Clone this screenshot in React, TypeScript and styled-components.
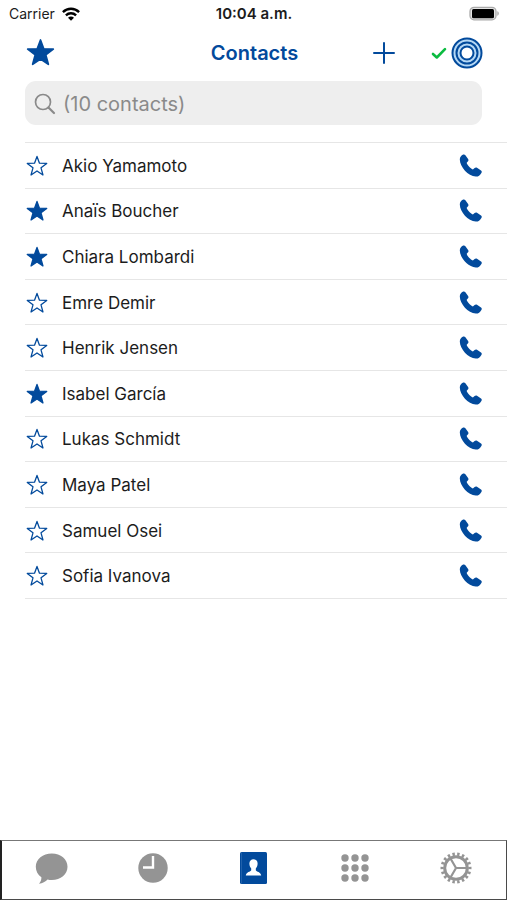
import React, { useState } from "react";
import styled, { createGlobalStyle } from "styled-components";

const navy = "#024a9c";
const grey = "#949494";

const GlobalStyle = createGlobalStyle`
  *, *::before, *::after { box-sizing: border-box; }
  body {
    margin: 0;
    background: #fff;
    color: #1c1c1c;
    font-family: Inter, "Liberation Sans", sans-serif;
  }
`;

const Page = styled.div`
  display: flex;
  flex-direction: column;
  min-height: 100vh;
`;

const StatusBar = styled.div`
  display: grid;
  grid-template-columns: 1fr auto 1fr;
  align-items: center;
  height: 28px;
  padding: 0 8px 0 9px;
  font-size: 14px;
  line-height: 20px;
`;

const Carrier = styled.span`
  display: flex;
  align-items: center;
  gap: 7px;
`;

const Time = styled.time`
  font-weight: 600;
  font-size: 15px;
`;

const BatteryIcon = styled.svg`
  justify-self: end;
`;

const Header = styled.header`
  display: grid;
  grid-template-columns: 1fr auto 1fr;
  align-items: center;
  height: 49px;
  padding: 0 24px 0 26px;
`;

const Title = styled.h1`
  margin: 0;
  color: ${navy};
  font-size: 20px;
  line-height: 24px;
  font-weight: 600;
`;

const Actions = styled.div`
  display: flex;
  align-items: center;
  justify-content: flex-end;
`;

const IconButton = styled.button`
  display: flex;
  align-items: center;
  justify-content: center;
  justify-self: start;
  padding: 0;
  border: 0;
  background: none;
  color: ${navy};
  cursor: pointer;
`;

const AccountButton = styled(IconButton)`
  gap: 4px;
  margin-left: 36px;
`;

const SearchField = styled.label`
  display: flex;
  align-items: center;
  gap: 7px;
  height: 44px;
  margin: 4px 25px 17px;
  padding: 1px 9px 0;
  border-radius: 11px;
  background: #eee;
  color: #8a8a8a;
`;

const SearchInput = styled.input`
  flex: 1;
  min-width: 0;
  padding: 0;
  border: 0;
  outline: 0;
  background: none;
  color: #1c1c1c;
  font: inherit;
  font-size: 20px;
  line-height: 24px;
  &::placeholder { color: #8a8a8a; opacity: 1; }
`;

const ContactList = styled.ul`
  display: grid;
  grid-auto-rows: 1fr;
  min-height: 457px;
  margin: 0 0 0 25px;
  padding: 0;
  border-top: 1px solid #e6e6e6;
  list-style: none;
`;

const ContactRow = styled.li`
  display: flex;
  align-items: center;
  gap: 14px;
  padding: 1px 24px 0 1px;
  border-bottom: 1px solid #e6e6e6;
`;

const ContactName = styled.span`
  flex: 1;
  font-size: 17px;
  line-height: 24px;
`;

const TabBar = styled.nav`
  display: flex;
  height: 60px;
  margin-top: auto;
  border: 1px solid #4a4a4a;
  border-top-color: #777;
  border-left: 2px solid #222;
`;

const Tab = styled.button<{ $active?: boolean }>`
  display: flex;
  flex: 1;
  align-items: center;
  justify-content: center;
  padding: 0 0 4px;
  border: 0;
  background: none;
  color: ${(p) => (p.$active ? navy : grey)};
  cursor: pointer;
`;

const Star = ({ size, filled }: { size: number; filled: boolean }) => (
  <svg width={size} height={size} viewBox="0 0 24 24" aria-hidden="true">
    <path
      d="M12 1.6 14.7 8.9 22.6 9.2 16.4 14 18.5 21.8 12 17.400 5.500 21.800 7.600 14 1.400 9.200 9.300 8.900Z"
      fill={filled ? "currentColor" : "#fff"}
      stroke="currentColor"
      strokeWidth="1.4"
      strokeLinejoin="round"
    />
  </svg>
);

const Phone = () => (
  <svg width="24" height="24" viewBox="0 0 24 24" aria-hidden="true">
    <path
      fill="currentColor"
      d="M4.200.6C5 .2 5.800.5 6.400 1.200L9.100 5C9.700 5.900 9.600 6.900 8.800 7.600L7.700 8.800C8 11 11.500 14.600 13.900 15.400L15.600 14C16.400 13.300 17.200 13.200 18 13.800L22 16.600C22.900 17.200 23 18.200 22.400 19C21 21.500 19 22.800 16.800 22.600C9 21.800 1 13 .8 5.400C.8 3.300 2.300 1.500 4.200.6Z"
    />
  </svg>
);

const initialContacts = [
  { name: "Akio Yamamoto", starred: false },
  { name: "Anaïs Boucher", starred: true },
  { name: "Chiara Lombardi", starred: true },
  { name: "Emre Demir", starred: false },
  { name: "Henrik Jensen", starred: false },
  { name: "Isabel García", starred: true },
  { name: "Lukas Schmidt", starred: false },
  { name: "Maya Patel", starred: false },
  { name: "Samuel Osei", starred: false },
  { name: "Sofia Ivanova", starred: false },
];

const tabs = [
  {
    label: "Messages",
    icon: (
      <svg width="34" height="34" viewBox="0 0 34 34" fill="currentColor" aria-hidden="true">
        <path d="M16.800 2.500C25.800 2.500 32.500 8.300 32.500 15.800S25.800 29 16.800 29C15.300 29 13.900 28.900 12.600 28.500C10.500 30.600 7.500 32.300 4 32.700C5.700 31 6.500 28.900 6.400 26.300C2.800 23.900 .8 20 .8 15.800C.8 8.300 7.800 2.500 16.800 2.500Z" />
      </svg>
    ),
  },
  {
    label: "Recents",
    icon: (
      <svg width="32" height="32" viewBox="0 0 32 32" aria-hidden="true">
        <circle cx="16" cy="16" r="14.7" fill="currentColor" />
        <path d="M16 4V15.500H6" fill="none" stroke="#fff" strokeWidth="2.400" />
      </svg>
    ),
  },
  {
    label: "Contacts",
    icon: (
      <svg width="28" height="32" viewBox="0 0 28 32" aria-hidden="true">
        <rect width="27" height="32" rx="1.500" fill="currentColor" />
        <path d="M1.500 0.500V31.500" stroke="#2867ae" strokeWidth="0.800" />
        <path
          fill="#fff"
          d="M13.500 7.300C16 7.300 17.800 9.200 17.600 11.800C17.500 13.800 16.800 15.500 15.800 16.500V18.200C16.300 19.800 21 19.800 21.200 23.600H5.800C6 19.800 10.700 19.800 11.200 18.200V16.500C10.200 15.500 9.500 13.800 9.400 11.800C9.200 9.200 11 7.300 13.500 7.300Z"
        />
      </svg>
    ),
  },
  {
    label: "Keypad",
    icon: (
      <svg width="28" height="28" viewBox="0 0 28 28" fill="currentColor" aria-hidden="true">
        {[4, 14, 24].map((y) => [4, 14, 24].map((x) => <circle key={`${x}-${y}`} cx={x} cy={y} r="3.700" />))}
      </svg>
    ),
  },
  {
    label: "Settings",
    icon: (
      <svg width="32" height="32" viewBox="0 0 32 32" fill="none" stroke="currentColor" aria-hidden="true">
        <circle cx="16" cy="16" r="11.300" strokeWidth="3" />
        <circle cx="16" cy="16" r="13.900" strokeWidth="3.200" pathLength="36" strokeDasharray="1 1" strokeDashoffset="0.500" />
        <path d="M16 16H27M16 16 10.500 6.500M16 16 10.500 25.500" strokeWidth="2.200" />
      </svg>
    ),
  },
];

export default function App() {
  const [contacts, setContacts] = useState(initialContacts);
  const [query, setQuery] = useState("");
  const [activeTab, setActiveTab] = useState("Contacts");

  const toggleStar = (name: string) =>
    setContacts((list) => list.map((c) => (c.name === name ? { ...c, starred: !c.starred } : c)));

  return (
    <>
      <GlobalStyle />
      <Page>
        <StatusBar>
          <Carrier>
            Carrier
            <svg width="18" height="14" viewBox="0 0 18 14" aria-hidden="true">
              <g fill="none" stroke="#000" strokeWidth="2.400">
                <path d="M0.900 5.100C5.500 0.700 12.500 0.700 17.100 5.100" />
                <path d="M3.900 8.400C6.800 5.600 11.200 5.600 14.100 8.400" />
              </g>
              <path d="M6 10.700C7.700 9.200 10.300 9.200 12 10.700L9 13.700Z" />
            </svg>
          </Carrier>
          <Time>10:04 a.m.</Time>
          <BatteryIcon width="30" height="16" viewBox="0 0 30 16" role="img" aria-label="Battery full">
            <rect x="1" y="1.400" width="26" height="12.400" rx="4" fill="#e4e4e4" stroke="#aaa" strokeWidth="1.300" />
            <rect x="3" y="3" width="22" height="9.200" rx="1.500" />
            <path d="M28.300 5.300C30.300 5.800 30.300 9.200 28.300 9.700Z" fill="#aaa" />
          </BatteryIcon>
        </StatusBar>
        <Header>
          <IconButton type="button" aria-label="Show favourites">
            <Star size={29} filled />
          </IconButton>
          <Title>Contacts</Title>
          <Actions>
            <IconButton type="button" aria-label="Add contact">
              <svg width="22" height="22" viewBox="0 0 22 22" fill="none" stroke="currentColor" aria-hidden="true">
                <path d="M11 1V21M1 11H21" strokeWidth="2" strokeLinecap="round" />
              </svg>
            </IconButton>
            <AccountButton type="button" aria-label="Account status: connected">
              <svg width="16" height="14" viewBox="0 0 16 14" fill="none" aria-hidden="true">
                <path d="M2 8 5.800 11.500 14 3.200" stroke="#0bbb40" strokeWidth="2.600" strokeLinecap="round" strokeLinejoin="round" />
              </svg>
              <svg width="32" height="32" viewBox="0 0 32 32" fill="none" aria-hidden="true">
                <circle cx="16" cy="16" r="10.500" stroke="#b5d8f5" strokeWidth="9" />
                <g stroke="currentColor" strokeWidth="2">
                  <circle cx="16" cy="16" r="14.500" />
                  <circle cx="16" cy="16" r="10.500" />
                  <circle cx="16" cy="16" r="6.500" />
                </g>
              </svg>
            </AccountButton>
          </Actions>
        </Header>
        <SearchField>
          <svg width="22" height="22" viewBox="0 0 22 22" fill="none" stroke="currentColor" strokeWidth="1.700" aria-hidden="true">
            <circle cx="9" cy="9" r="7.500" />
            <path d="M14.500 14.500 20 20" strokeWidth="2.200" strokeLinecap="round" />
          </svg>
          <SearchInput
            type="text"
            aria-label="Search contacts"
            placeholder="(10 contacts)"
            value={query}
            onChange={(e) => setQuery(e.target.value)}
          />
        </SearchField>
        <ContactList>
          {contacts.map((c) => (
            <ContactRow key={c.name}>
              <IconButton
                type="button"
                aria-label={`Favourite ${c.name}`}
                aria-pressed={c.starred}
                onClick={() => toggleStar(c.name)}
              >
                <Star size={22} filled={c.starred} />
              </IconButton>
              <ContactName>{c.name}</ContactName>
              <IconButton type="button" aria-label={`Call ${c.name}`}>
                <Phone />
              </IconButton>
            </ContactRow>
          ))}
        </ContactList>
        <TabBar aria-label="Main">
          {tabs.map((t) => (
            <Tab
              key={t.label}
              type="button"
              aria-label={t.label}
              aria-current={activeTab === t.label ? "page" : undefined}
              $active={activeTab === t.label}
              onClick={() => setActiveTab(t.label)}
            >
              {t.icon}
            </Tab>
          ))}
        </TabBar>
      </Page>
    </>
  );
}
